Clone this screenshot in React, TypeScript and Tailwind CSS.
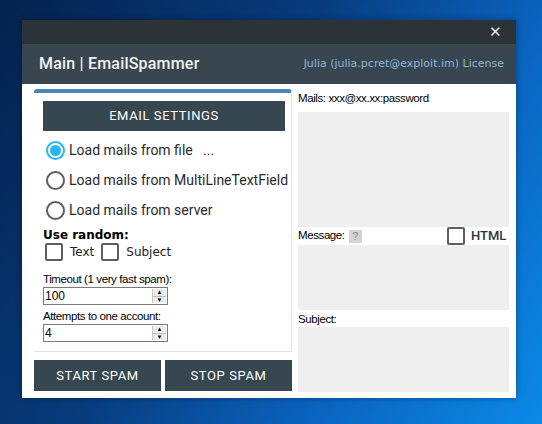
import React, { useState } from "react"

const ui = { fontFamily: "Roboto, 'Liberation Sans', sans-serif" }
const ms = { fontFamily: "'Liberation Sans', Arial, sans-serif" }
const vd = { fontFamily: "'DejaVu Sans', Verdana, sans-serif" }

function Radio({ label, checked, onClick }: { label: string; checked?: boolean; onClick: () => void }) {
  return (
    <button onClick={onClick} className="flex items-center h-[30px] pl-[3px] text-left whitespace-nowrap">
      <span
        className={`shrink-0 w-[19px] h-[19px] rounded-full border-2 flex items-center justify-center ${checked ? "border-[#29b6f6]" : "border-[#5f5f5f]"}`}
      >
        {checked && <span className="w-[11px] h-[11px] rounded-full bg-[#29b6f6]" />}
      </span>
      <span className="ml-[4px] text-[14px] text-[#2a2a2a] whitespace-pre" style={ui}>
        {label}
      </span>
    </button>
  )
}

function Check({ label, on, onClick }: { label: string; on: boolean; onClick: () => void }) {
  return (
    <button onClick={onClick} className="flex items-center gap-[7px]">
      <span className="w-[18px] h-[18px] border-2 border-[#5f5f5f] rounded-[2px] flex items-center justify-center text-[11px] text-[#29b6f6]">
        {on ? "✓" : ""}
      </span>
      <span className="text-[12px] text-[#222]" style={vd}>
        {label}
      </span>
    </button>
  )
}

function Spinner({ value }: { value: string }) {
  return (
    <div className="flex w-[125px] h-[18px] border border-[#7a7a7a] bg-white">
      <span className="flex-1 text-[12px] leading-[16px] pl-[1px] text-black" style={ms}>
        {value}
      </span>
      <div className="w-[14px] flex flex-col border-l border-[#c8c8c8] mr-[1px] my-[1px]">
        <span className="flex-1 flex items-center justify-center bg-[#ececec] border-b border-[#bdbdbd] text-[6px] leading-none text-black">▲</span>
        <span className="flex-1 flex items-center justify-center bg-[#ececec] text-[6px] leading-none text-black">▼</span>
      </div>
    </div>
  )
}

export default function App() {
  const [source, setSource] = useState(0)
  const [rText, setRText] = useState(false)
  const [rSubject, setRSubject] = useState(false)
  const [html, setHtml] = useState(false)

  return (
    <main className="w-[542px] h-[424px] pt-[20px] pl-[22px] bg-[linear-gradient(120deg,#04224d_0%,#073b7c_40%,#0a63bf_70%,#0a8ae6_100%)] overflow-hidden">
      <div className="w-[494px] h-[378px] flex flex-col bg-white shadow-[0_0_6px_rgba(0,0,0,0.35)]">
        <div className="h-[24px] bg-[#2b3339] flex items-center justify-end pr-[14px]">
          <span className="text-[#e6e6e6] text-[15px] leading-none" style={ui}>✕</span>
        </div>
        <div className="h-[40px] bg-[#38474f] flex items-center justify-between pl-[17px] pr-[12px]">
          <span className="text-[16px] font-medium text-[#f2f2f2] tracking-[0.2px]" style={ui}>
            Main | EmailSpammer
          </span>
          <span className="text-[11px] text-[#8fb6d6]" style={vd}>
            Julia (julia.pcret@exploit.im) License
          </span>
        </div>

        <div className="flex-1 flex pl-[12px]">
          <div className="w-[258px] flex flex-col pt-[5px]">
            <div className="h-[263px] border-t-4 border-[#4a86b9] rounded-t-[3px] border-r border-b border-r-[#e4e4e4] border-b-[#e4e4e4] pl-[9px] pr-[6px]">
              <button className="mt-[8px] w-[242px] h-[30px] bg-[#37474f] text-white text-[13px] tracking-[0.6px]" style={ui}>
                EMAIL SETTINGS
              </button>
              <div className="flex flex-col mt-[4px]">
                <Radio label="Load mails from file   ..." checked={source === 0} onClick={() => setSource(0)} />
                <Radio label="Load mails from MultiLineTextField" checked={source === 1} onClick={() => setSource(1)} />
                <Radio label="Load mails from server" checked={source === 2} onClick={() => setSource(2)} />
              </div>
              <div className="mt-[3px] text-[12px] font-bold text-black leading-[14px]" style={vd}>
                Use random:
              </div>
              <div className="flex gap-[7px] pl-[2px] mt-[1px]">
                <Check label="Text" on={rText} onClick={() => setRText(!rText)} />
                <Check label="Subject" on={rSubject} onClick={() => setRSubject(!rSubject)} />
              </div>
              <div className="mt-[12px] text-[11.5px] text-black tracking-[-0.4px] leading-[13px]" style={ms}>
                Timeout (1 very fast spam):
              </div>
              <div className="mt-[1px]">
                <Spinner value="100" />
              </div>
              <div className="mt-[5px] text-[11.5px] text-black tracking-[-0.4px] leading-[13px]" style={ms}>
                Attempts to one account:
              </div>
              <div className="mt-[1px]">
                <Spinner value="4" />
              </div>
            </div>
            <div className="flex gap-[4px] mt-[8px]">
              <button className="w-[127px] h-[31px] bg-[#37474f] text-white text-[13px] tracking-[0.6px]" style={ui}>
                START SPAM
              </button>
              <button className="w-[127px] h-[31px] bg-[#37474f] text-white text-[13px] tracking-[0.6px]" style={ui}>
                STOP SPAM
              </button>
            </div>
          </div>

          <div className="w-[211px] ml-[6px] flex flex-col pt-[6px]">
            <div className="h-[22px] text-[11.5px] tracking-[-0.4px] text-black" style={ms}>
              Mails: xxx@xx.xx:password
            </div>
            <div className="h-[115px] bg-[#efefef]" />
            <div className="h-[18px] flex items-center">
              <div className="w-[142px] h-full flex items-center text-[11.5px] tracking-[-0.4px] text-black" style={ms}>
                Message:
                <span className="ml-[4px] w-[13px] h-[13px] bg-[#d4d4d4] text-[#8a8a8a] text-[11px] leading-[13px] text-center">?</span>
              </div>
              <button onClick={() => setHtml(!html)} className="ml-[7px] flex items-center gap-[6px] h-[18px]">
                <span className="w-[18px] h-[18px] border-2 border-[#5f5f5f] rounded-[2px]" />
                <span className="text-[13px] font-medium text-[#333]" style={ui}>HTML</span>
              </button>
            </div>
            <div className="h-[65px] bg-[#efefef]" />
            <div className="h-[17px] pt-[3px] text-[11.5px] tracking-[-0.4px] text-black leading-[13px]" style={ms}>
              Subject:
            </div>
            <div className="h-[65px] bg-[#efefef]" />
          </div>
        </div>
      </div>
    </main>
  )
}
